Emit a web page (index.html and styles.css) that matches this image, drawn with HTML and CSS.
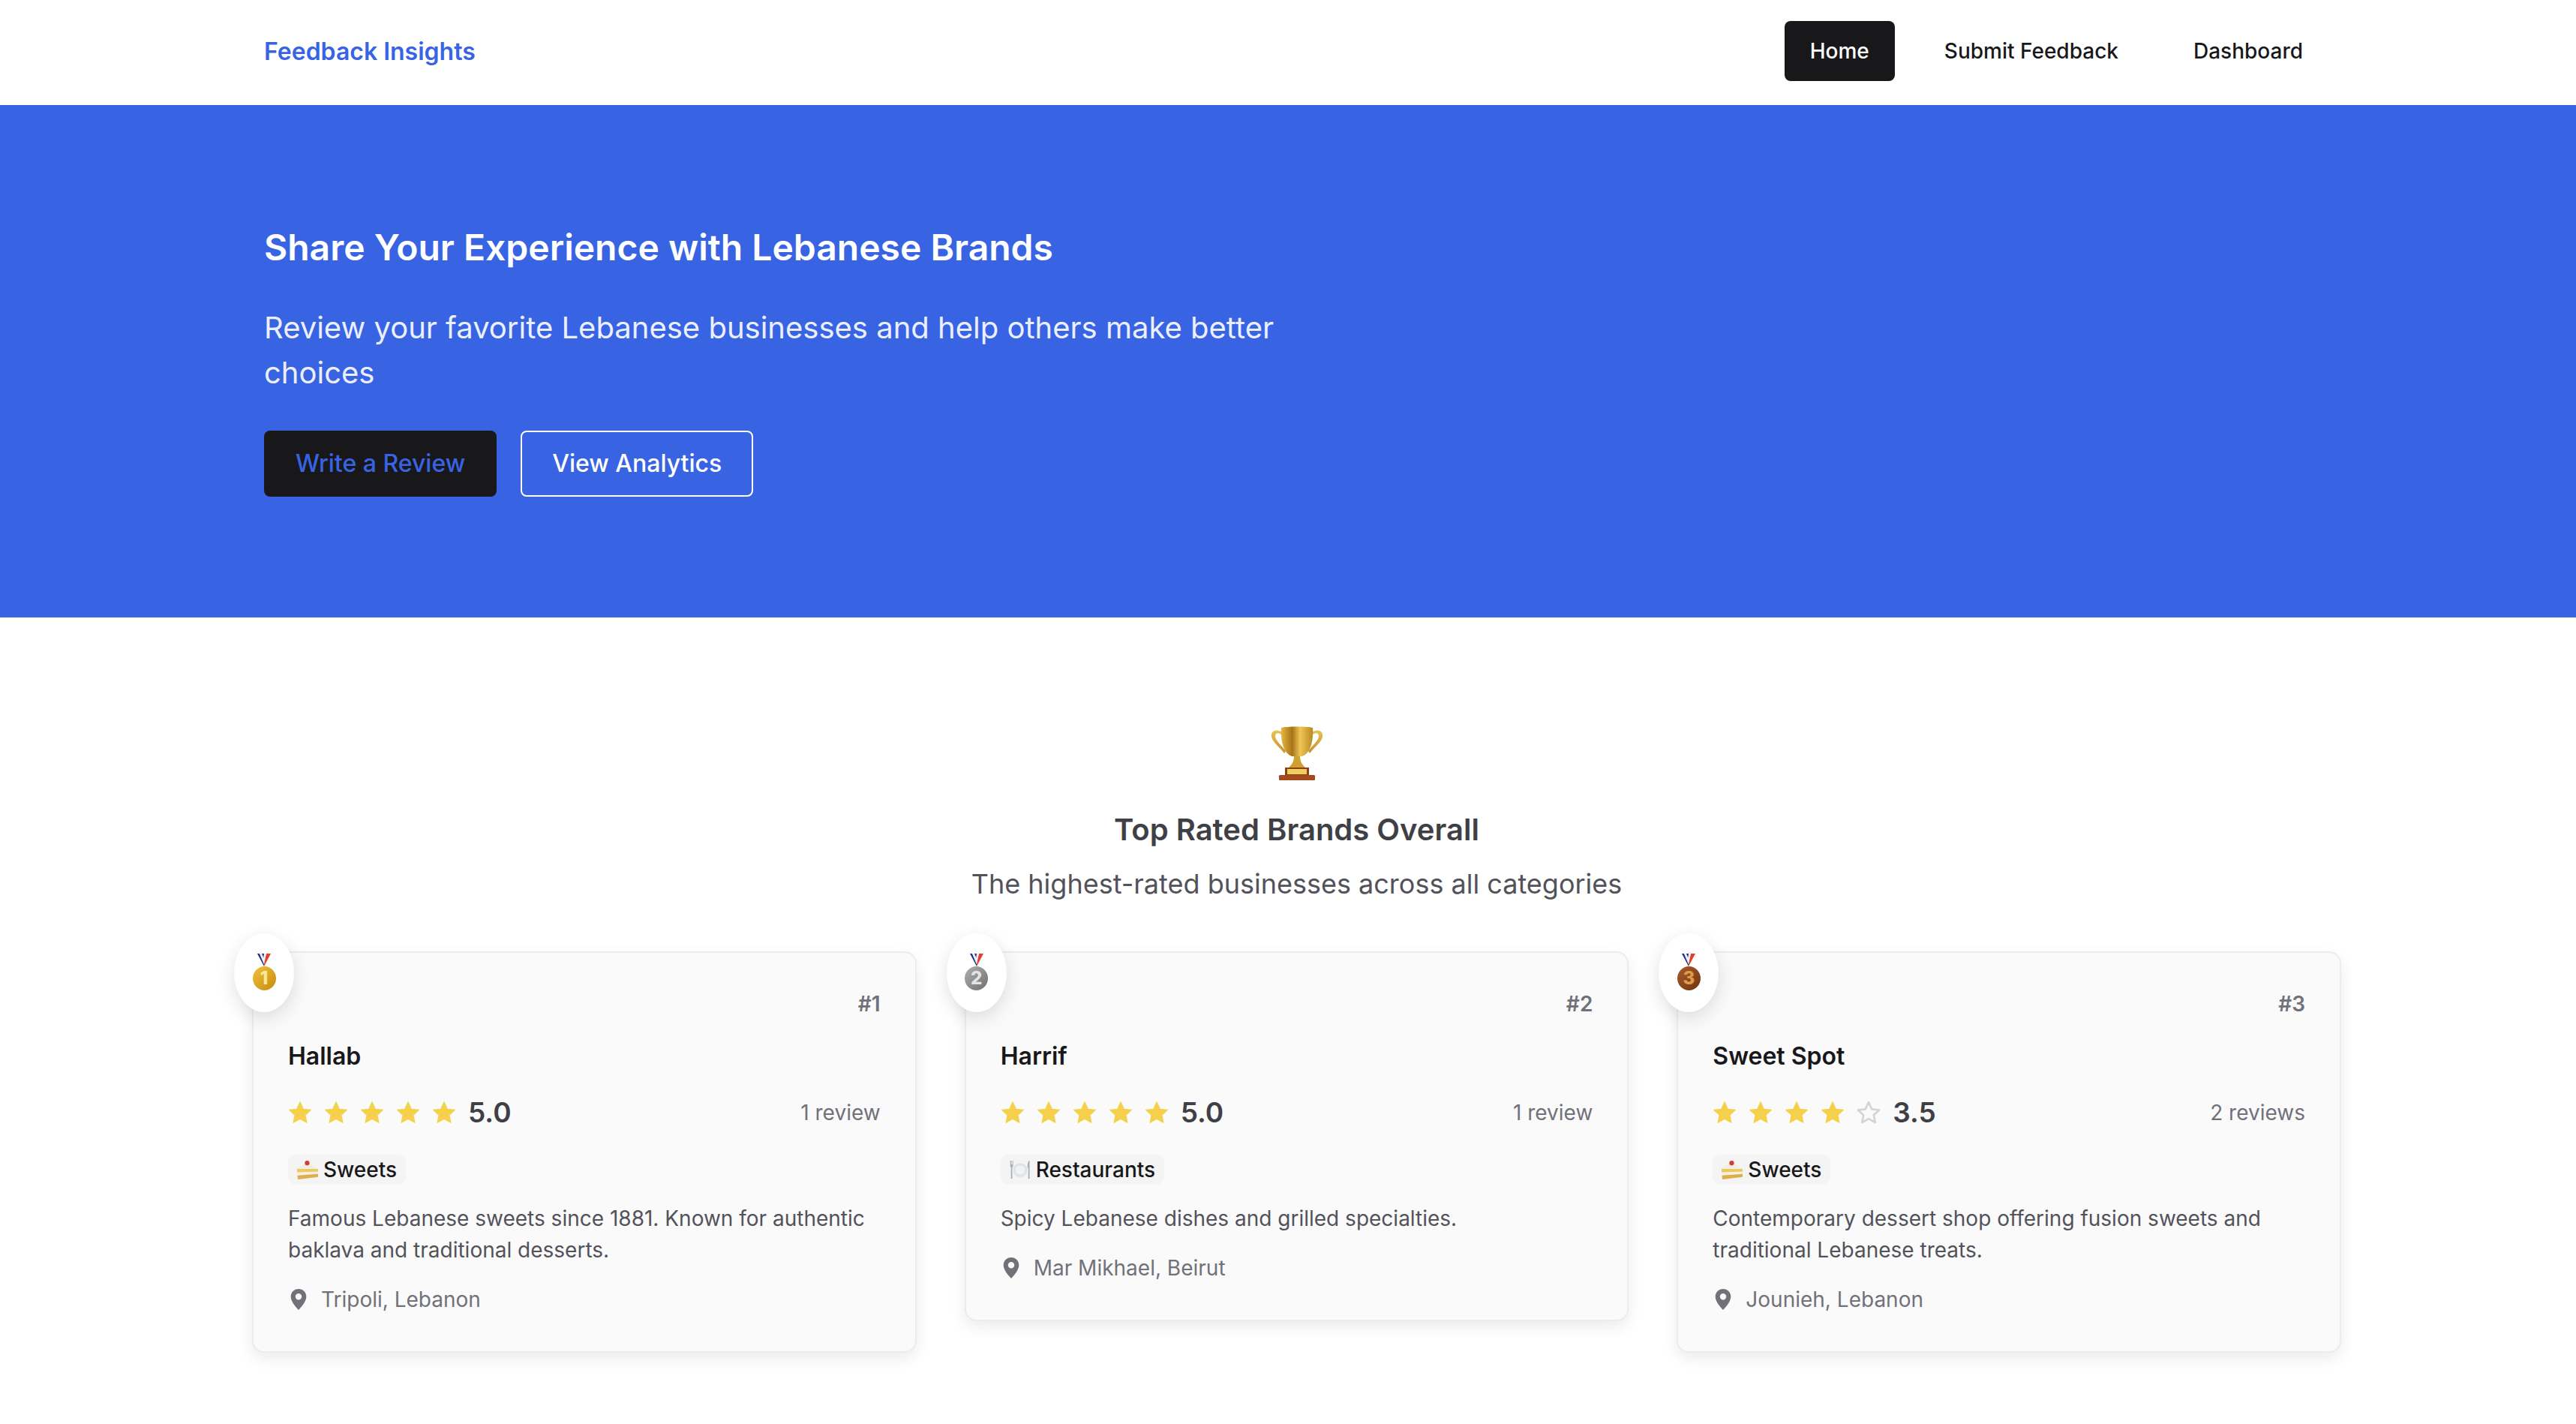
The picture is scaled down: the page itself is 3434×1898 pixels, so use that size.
FILE: index.html
```html
<!DOCTYPE html>
<html lang="en">
<head>
    <meta charset="UTF-8">
    <meta name="viewport" content="width=device-width, initial-scale=1.0">
    <title>Feedback Insights</title>
    <link rel="stylesheet" href="styles.css">
</head>
<body>

    <!-- Shared icons -->
    <svg class="icon-defs" aria-hidden="true">
        <defs>
            <linearGradient id="cupFace" x1="0" y1="0" x2="1" y2="0">
                <stop offset="0" stop-color="#e6b83f"/>
                <stop offset="0.35" stop-color="#a8741a"/>
                <stop offset="0.6" stop-color="#eec653"/>
                <stop offset="1" stop-color="#b98a24"/>
            </linearGradient>
            <linearGradient id="handleFace" x1="0" y1="0" x2="0" y2="1">
                <stop offset="0" stop-color="#e9c455"/>
                <stop offset="1" stop-color="#c4912a"/>
            </linearGradient>
            <symbol id="star" viewBox="0 0 24 24">
                <path d="M12 1.600l3.200 6.900 7.400.9-5.500 5.100 1.500 7.400L12 18.100l-6.600 3.800 1.500-7.400-5.500-5.100 7.400-.9z" stroke-linejoin="round"/>
            </symbol>
            <symbol id="pin" viewBox="0 0 24 32">
                <path fill-rule="evenodd" d="M12 1C5.600 1 1 5.800 1 12c0 7.500 8.200 15.800 11 19 2.800-3.200 11-11.500 11-19C23 5.800 18.400 1 12 1zm0 15.500a4.500 4.500 0 1 1 0-9 4.500 4.500 0 0 1 0 9z"/>
            </symbol>
            <symbol id="ribbon" viewBox="0 0 18 17">
                <path d="M0 0h3l6 14v3z" fill="#1f2f94"/>
                <path d="M3 0h3l3.500 9L9 14z" fill="#eef0f6"/>
                <path d="M6 0h3l-.5 6z" fill="#1f2f94"/>
                <path d="M12 0h6l-9 17v-3z" fill="#e2402f"/>
                <path d="M9 0h3l-2.500 9L8.500 6z" fill="#eef0f6"/>
            </symbol>
            <symbol id="cake" viewBox="0 0 27 24">
                <path d="M0 10L12 3l15 7z" fill="#f3ecd9"/>
                <path d="M0 10h27v11L1 24z" fill="#f7f0da"/>
                <path d="M0 10.500l27 0v3.500L0 15z" fill="#ecc766"/>
                <path d="M.5 19l26.500-2v4L1 24z" fill="#dcae4c"/>
                <circle cx="13" cy="3" r="3" fill="#cf3f38"/>
            </symbol>
            <symbol id="plate" viewBox="0 0 30 28">
                <circle cx="15" cy="14" r="10.500" fill="#dfe2e6"/>
                <circle cx="15" cy="14" r="7" fill="#f1f2f4"/>
                <path d="M0 0v8l1.200 2V27h2V10L4.500 8V0h-.8v6h-.8V0h-.8v6h-.8V0z" fill="#a6afbc"/>
                <path d="M28 0c-1.800 2.500-2.500 7-2 11h1v16h2V0z" fill="#a6afbc"/>
            </symbol>
        </defs>
    </svg>

    <!-- Header and Navigation -->
    <header class="site-header">
        <a href="#" class="logo">Feedback Insights</a>
        <nav class="main-nav">
            <a href="#" class="nav-link active">Home</a>
            <a href="#" class="nav-link">Submit Feedback</a>
            <a href="#" class="nav-link">Dashboard</a>
        </nav>
    </header>

    <!-- Hero -->
    <section class="hero">
        <h1>Share Your Experience with Lebanese Brands</h1>
        <p>Review your favorite Lebanese businesses and help others make better choices</p>
        <div class="hero-actions">
            <a href="#" class="btn btn-dark">Write a Review</a>
            <a href="#" class="btn btn-outline">View Analytics</a>
        </div>
    </section>

    <!-- Top rated -->
    <main class="top-rated">
        <div class="section-head">
            <svg class="trophy" viewBox="0 0 70 72" aria-hidden="true">
                <path d="M14 7C5 3 0 7 1 14c1 7 12 15 17 22l2-3C15 26 6 19 6 13c0-4 4-5 8-2z" fill="url(#handleFace)"/>
                <path d="M56 7c9-4 14 0 13 7-1 7-12 15-17 22l-2-3c5-7 14-14 14-20 0-4-4-5-8-2z" fill="url(#handleFace)"/>
                <path d="M14 2c6-2 36-2 42 0 1 18-3 34-14 38H28C17 36 13 20 14 2z" fill="url(#cupFace)"/>
                <path d="M31 40h8c0 6 2 10 7 15H24c5-5 7-9 7-15z" fill="#d2a02d"/>
                <path d="M19 55h32v10H19z" fill="#8f3f16"/>
                <path d="M22 57h26v7H22z" fill="#f0cd60"/>
                <path d="M13 65h44a2 2 0 0 1 2 3v3a1 1 0 0 1-1 1H12a1 1 0 0 1-1-1v-3a2 2 0 0 1 2-3z" fill="#a24a1c"/>
            </svg>
            <h2>Top Rated Brands Overall</h2>
            <p>The highest-rated businesses across all categories</p>
        </div>

        <div class="brand-grid">

            <article class="brand-card">
                <div class="medal">
                    <svg class="ribbon"><use href="#ribbon"/></svg>
                    <span class="medal-face gold">1</span>
                </div>
                <div class="rank">#1</div>
                <h3>Hallab</h3>
                <div class="rating-row">
                    <div class="stars">
                        <svg class="star"><use href="#star"/></svg>
                        <svg class="star"><use href="#star"/></svg>
                        <svg class="star"><use href="#star"/></svg>
                        <svg class="star"><use href="#star"/></svg>
                        <svg class="star"><use href="#star"/></svg>
                        <span class="score">5.0</span>
                    </div>
                    <span class="review-count">1 review</span>
                </div>
                <span class="tag"><svg class="tag-icon"><use href="#cake"/></svg>Sweets</span>
                <p class="description">Famous Lebanese sweets since 1881. Known for authentic baklava and traditional desserts.</p>
                <div class="location"><svg class="pin"><use href="#pin"/></svg>Tripoli, Lebanon</div>
            </article>

            <article class="brand-card">
                <div class="medal">
                    <svg class="ribbon"><use href="#ribbon"/></svg>
                    <span class="medal-face silver">2</span>
                </div>
                <div class="rank">#2</div>
                <h3>Harrif</h3>
                <div class="rating-row">
                    <div class="stars">
                        <svg class="star"><use href="#star"/></svg>
                        <svg class="star"><use href="#star"/></svg>
                        <svg class="star"><use href="#star"/></svg>
                        <svg class="star"><use href="#star"/></svg>
                        <svg class="star"><use href="#star"/></svg>
                        <span class="score">5.0</span>
                    </div>
                    <span class="review-count">1 review</span>
                </div>
                <span class="tag"><svg class="tag-icon"><use href="#plate"/></svg>Restaurants</span>
                <p class="description">Spicy Lebanese dishes and grilled specialties.</p>
                <div class="location"><svg class="pin"><use href="#pin"/></svg>Mar Mikhael, Beirut</div>
            </article>

            <article class="brand-card">
                <div class="medal">
                    <svg class="ribbon"><use href="#ribbon"/></svg>
                    <span class="medal-face bronze">3</span>
                </div>
                <div class="rank">#3</div>
                <h3>Sweet Spot</h3>
                <div class="rating-row">
                    <div class="stars">
                        <svg class="star"><use href="#star"/></svg>
                        <svg class="star"><use href="#star"/></svg>
                        <svg class="star"><use href="#star"/></svg>
                        <svg class="star"><use href="#star"/></svg>
                        <svg class="star empty"><use href="#star"/></svg>
                        <span class="score">3.5</span>
                    </div>
                    <span class="review-count">2 reviews</span>
                </div>
                <span class="tag"><svg class="tag-icon"><use href="#cake"/></svg>Sweets</span>
                <p class="description">Contemporary dessert shop offering fusion sweets and traditional Lebanese treats.</p>
                <div class="location"><svg class="pin"><use href="#pin"/></svg>Jounieh, Lebanon</div>
            </article>

        </div>
    </main>

</body>
</html>
```
FILE: styles.css
```css
/* General Styling */
body {
    font-family: Inter, "Noto Sans", sans-serif;
    margin: 0;
    padding: 0;
    background: #fff;
    color: #18181b;
}

h1, h2, h3, p {
    margin: 0;
}

a {
    text-decoration: none;
}

.icon-defs {
    width: 0;
    height: 0;
    position: absolute;
}

/* Header and Navigation */
.site-header {
    height: 140px;
    box-sizing: border-box;
    padding: 0 330px 4px 352px;
    display: flex;
    align-items: center;
    justify-content: space-between;
}

.logo {
    color: #3864e4;
    font-size: 32px;
    font-weight: 600;
}

.main-nav {
    display: flex;
    gap: 32px;
}

.nav-link {
    color: #18181b;
    font-size: 28px;
    font-weight: 500;
    line-height: 80px;
    padding: 0 34px;
    border-radius: 8px;
}

.nav-link.active {
    background: #18181b;
    color: #fff;
}

/* Hero */
.hero {
    height: 683px;
    box-sizing: border-box;
    padding: 160px 352px 0;
    background: #3864e4;
    color: #fff;
}

.hero h1 {
    font-size: 48px;
    font-weight: 600;
    line-height: 60px;
}

.hero p {
    max-width: 1400px;
    margin-top: 47px;
    font-size: 40px;
    line-height: 60px;
    opacity: 0.9;
}

.hero-actions {
    display: flex;
    gap: 32px;
    margin-top: 47px;
}

.btn {
    box-sizing: border-box;
    height: 88px;
    line-height: 84px;
    padding: 0 40px;
    border-radius: 8px;
    border: 2px solid transparent;
    font-size: 32px;
    font-weight: 500;
}

.btn-dark {
    background: #18181b;
    color: #3864e4;
}

.btn-outline {
    border-color: #fff;
    color: #fff;
}

/* Top rated */
.top-rated {
    padding: 145px 313px 60px 336px;
}

.section-head {
    text-align: center;
}

.trophy {
    display: block;
    width: 70px;
    height: 72px;
    margin: 0 auto;
}

.section-head h2 {
    margin-top: 40px;
    font-size: 40px;
    font-weight: 600;
    line-height: 52px;
    color: #3f3f46;
}

.section-head p {
    margin-top: 20px;
    font-size: 36px;
    line-height: 52px;
    color: #52525b;
}

.brand-grid {
    display: grid;
    grid-template-columns: repeat(3, 1fr);
    gap: 64px;
    align-items: start;
    margin-top: 64px;
}

/* Brand cards */
.brand-card {
    position: relative;
    padding: 48px 46px;
    background: #fafafa;
    border: 2px solid #ececee;
    border-radius: 16px;
    box-shadow: 0 8px 20px rgba(0, 0, 0, 0.08);
}

.medal {
    position: absolute;
    top: -26px;
    left: -26px;
    width: 80px;
    height: 105px;
    display: flex;
    flex-direction: column;
    align-items: center;
    padding-top: 27px;
    box-sizing: border-box;
    background: #fff;
    border-radius: 50%;
    box-shadow: 0 8px 24px rgba(0, 0, 0, 0.12);
}

.ribbon {
    width: 18px;
    height: 17px;
}

.medal-face {
    width: 31px;
    height: 32px;
    line-height: 32px;
    text-align: center;
    font-size: 24px;
    font-weight: 800;
    border-radius: 50%;
}

.gold {
    background: linear-gradient(135deg, #f0c33a, #c78a12);
    color: #fbe79a;
}

.silver {
    background: linear-gradient(135deg, #b0b0b0, #6f6f6f);
    color: #e4e4e4;
}

.bronze {
    background: linear-gradient(135deg, #a85c28, #6f3510);
    color: #e09a4c;
}

.rank {
    text-align: right;
    font-size: 28px;
    font-weight: 600;
    line-height: 40px;
    color: #71717a;
}

.brand-card h3 {
    margin-top: 28px;
    font-size: 32px;
    font-weight: 600;
    line-height: 44px;
    color: #18181b;
}

.rating-row {
    display: flex;
    align-items: center;
    justify-content: space-between;
    margin-top: 30px;
}

.stars {
    display: flex;
    align-items: center;
    gap: 16px;
}

.star {
    width: 32px;
    height: 32px;
    fill: #f5d04a;
    stroke: #f5d04a;
}

.star.empty {
    fill: none;
    stroke: #d4d4d8;
    stroke-width: 2;
}

.score {
    font-size: 37px;
    font-weight: 600;
    color: #3f3f46;
}

.review-count {
    font-size: 28px;
    color: #71717a;
}

.tag {
    display: inline-flex;
    align-items: center;
    gap: 7px;
    height: 40px;
    margin-top: 34px;
    padding: 0 12px;
    background: #f4f4f5;
    border-radius: 10px;
    font-size: 28px;
    font-weight: 500;
    color: #18181b;
}

.tag-icon {
    width: 28px;
    height: 25px;
}

.description {
    margin-top: 24px;
    font-size: 28px;
    line-height: 42px;
    color: #52525b;
}

.location {
    display: flex;
    align-items: center;
    gap: 18px;
    margin-top: 24px;
    font-size: 28px;
    line-height: 42px;
    color: #71717a;
}

.pin {
    width: 24px;
    height: 30px;
    margin-left: 2px;
    fill: #71717a;
}
```
